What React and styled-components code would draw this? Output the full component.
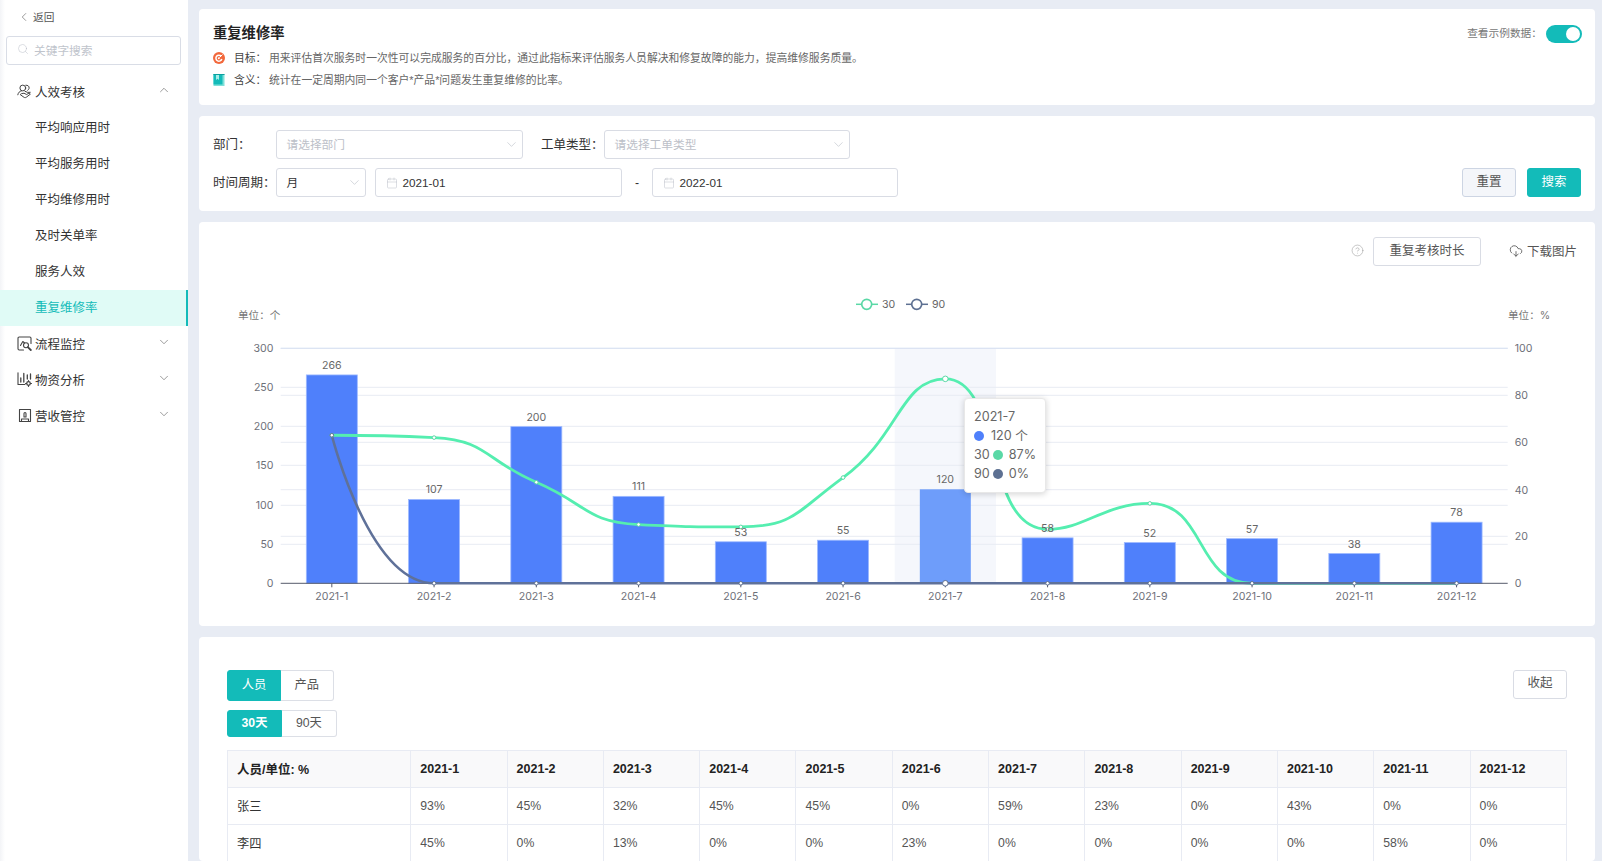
import React from "react";
import styled, { createGlobalStyle } from "styled-components";
import {
  ChevronLeft,
  ChevronUp,
  ChevronDown,
  Search,
  CircleHelp,
  CloudDownload,
  Calendar,
} from "lucide-react";

const GlobalStyle = createGlobalStyle`
  html, body {
    margin: 0;
    padding: 0;
    height: 861px;
    overflow: hidden;
    background: #e8ecf4;
    font-family: "Liberation Sans", "Noto Sans CJK SC", sans-serif;
    color: #333;
  }
  * { box-sizing: border-box; }
`;

const TEAL = "#13bbb9";
// full-width punctuation
const COLON = "\uFF1A";
const COMMA = "\uFF0C";

const Page = styled.div`
  display: flex;
  width: 1602px;
  height: 861px;
  overflow: hidden;
`;

const Sidebar = styled.aside`
  flex: 0 0 188px;
  background: linear-gradient(to right, #f3f4f7, #fff 5px);
  font-size: 12.5px;
`;

const BackRow = styled.div`
  display: flex;
  align-items: center;
  height: 33px;
  padding-left: 17px;
  gap: 2px;
  font-size: 10.7px;
  color: #555;
`;

const SearchBox = styled.div`
  display: flex;
  align-items: center;
  gap: 5px;
  height: 29px;
  margin: 3px 7px 9px 6px;
  padding: 0 0 3px 10px;
  border: 1px solid #d9dde6;
  border-radius: 3px;
  font-size: 11.7px;
  color: #c0c4cc;
`;

const MenuRow = styled.div`
  display: flex;
  align-items: center;
  height: 36px;
  padding: 0 17px 1px 16.5px;
  color: #333;
  svg.lead {
    flex: 0 0 15px;
    margin-right: 3.5px;
  }
  span {
    flex: 1;
  }
  svg.caret {
    margin-top: -4px;
  }
`;

const SubItem = styled.div`
  display: flex;
  align-items: center;
  height: 36px;
  padding: 0 0 4px 35px;
  color: ${(p) => (p.$active ? TEAL : "#333")};
  background: ${(p) => (p.$active ? "#e0fbf6" : "transparent")};
  border-right: ${(p) => (p.$active ? `2px solid ${TEAL}` : "none")};
`;

const Main = styled.main`
  flex: 1;
  display: flex;
  flex-direction: column;
  gap: 11px;
  padding: 9px 7px 0 11px;
  min-width: 0;
`;

const Card = styled.section`
  flex: 0 0 ${(p) => p.$h}px;
  background: #fff;
  border-radius: 4px;
`;

const IntroCard = styled(Card)`
  display: flex;
  justify-content: space-between;
  padding: 15px 13px 0 14px;
`;

const Title = styled.h1`
  margin: 0 0 4px;
  font-size: 14.3px;
  line-height: 18px;
  font-weight: 700;
  color: #222;
`;

const IntroRow = styled.div`
  display: flex;
  align-items: center;
  height: 22px;
  font-size: 10.8px;
  color: #666;
  svg {
    margin-top: 2px;
  }
  b {
    font-weight: 400;
    color: #444;
    width: 35px;
    margin-left: 9px;
  }
`;

const ExampleSwitch = styled.div`
  display: flex;
  align-items: flex-start;
  gap: 4px;
  padding-top: 1px;
  font-size: 10.7px;
  line-height: 17px;
  color: #777;
`;

const Toggle = styled.div`
  display: flex;
  align-items: center;
  justify-content: flex-end;
  width: 36px;
  height: 18px;
  padding-right: 2px;
  border-radius: 9px;
  background: ${TEAL};
  &::after {
    content: "";
    width: 14px;
    height: 14px;
    border-radius: 50%;
    background: #fff;
  }
`;

const FilterCard = styled(Card)`
  display: flex;
  flex-direction: column;
  gap: 9px;
  padding: 14px;
`;

const FilterRow = styled.div`
  display: flex;
  align-items: center;
  height: 29px;
`;

const FieldLabel = styled.label`
  flex: 0 0 63px;
  padding-bottom: 2px;
  font-size: 12.5px;
  color: #333;
  margin-left: ${(p) => p.$gap || 0}px;
`;

const Field = styled.div`
  display: flex;
  align-items: center;
  flex: 0 0 ${(p) => p.$w}px;
  height: 29px;
  padding: 0 3px 0 9.5px;
  margin-left: ${(p) => p.$gap || 0}px;
  border: 1px solid #d9dce4;
  border-radius: 3px;
  font-size: 11.7px;
  color: ${(p) => (p.$empty ? "#bcc0c8" : "#333")};
  span {
    flex: 1;
    padding-bottom: 2px;
  }
`;

const DateText = styled.div`
  margin-left: 5px;
  font-size: 11.7px;
  color: #333;
`;

const Dash = styled.div`
  flex: 0 0 30px;
  text-align: center;
  font-size: 12.25px;
  color: #333;
`;

const Actions = styled.div`
  display: flex;
  gap: 11px;
  margin-left: auto;
`;

const Button = styled.button`
  width: ${(p) => p.$w || 54}px;
  height: 29px;
  padding: 0 0 2px;
  border-radius: 3px;
  font: inherit;
  font-size: 12.5px;
  line-height: 24px;
  color: ${(p) => (p.$primary ? "#fff" : "#555")};
  background: ${(p) => (p.$primary ? TEAL : p.$soft ? "#f4f6fa" : "#fff")};
  border: 1px solid ${(p) => (p.$primary ? TEAL : p.$soft ? "#cdd5e3" : "#d9dce4")};
`;

const ChartCard = styled(Card)`
  display: flex;
  flex-direction: column;
`;

const ChartToolbar = styled.div`
  display: flex;
  align-items: center;
  justify-content: flex-end;
  flex: 0 0 48px;
  padding: 15px 18px 4px 0;
  color: #aaa;
`;

const HelpIcon = styled(CircleHelp)`
  margin: -2px 9px 0 0;
`;

const DownloadLink = styled.div`
  display: flex;
  align-items: center;
  gap: 4px;
  margin-left: 28px;
  padding-bottom: 2px;
  font-size: 12.5px;
  color: #555;
`;

const ChartArea = styled.div`
  position: relative;
  flex: 1;
  svg {
    display: block;
  }
`;

const Tooltip = styled.div`
  position: absolute;
  left: 765px;
  top: 128px;
  width: 82px;
  height: 95px;
  padding: 8px 0 0 9px;
  background: #fff;
  border: 1px solid #e8e8e8;
  border-radius: 4px;
  box-shadow: 0 1px 6px rgba(0, 0, 0, 0.18);
  font-family: Inter, "Noto Sans CJK SC", sans-serif;
  font-size: 12.6px;
  line-height: 19px;
  color: #666;
`;

const TipRow = styled.div`
  display: flex;
  align-items: center;
  gap: ${(p) => p.$gap || 3}px;
  white-space: nowrap;
`;

const TipValue = styled.span`
  margin-left: 3px;
`;

const Dot = styled.i`
  flex: 0 0 10px;
  height: 10px;
  border-radius: 50%;
  background: ${(p) => p.$color};
`;

const TableCard = styled(Card)`
  flex: 1;
  padding: 32.5px 28px 0;
  overflow: hidden;
`;

const TableHead = styled.div`
  display: flex;
  justify-content: space-between;
  align-items: flex-start;
`;

const Segments = styled.div`
  display: flex;
  flex-direction: column;
  align-items: flex-start;
  gap: 9px;
`;

const SegmentGroup = styled.div`
  display: inline-flex;
  height: ${(p) => p.$h}px;
`;

const Segment = styled.div`
  display: flex;
  align-items: center;
  justify-content: center;
  width: ${(p) => p.$w}px;
  padding-bottom: 3px;
  font-size: 12.25px;
  color: ${(p) => (p.$on ? "#fff" : "#555")};
  font-weight: ${(p) => (p.$bold ? 700 : 400)};
  background: ${(p) => (p.$on ? TEAL : "#fff")};
  border: 1px solid ${(p) => (p.$on ? TEAL : "#dcdfe6")};
  border-left-width: ${(p) => (p.$on ? 1 : 0)}px;
  border-radius: ${(p) => (p.$on ? "3px 0 0 3px" : "0 3px 3px 0")};
`;

const DataTable = styled.table`
  width: 1340px;
  margin-top: 13.5px;
  table-layout: fixed;
  border-collapse: collapse;
  font-size: 12.25px;
  col.first {
    width: 183.3px;
  }
  th, td {
    height: 37px;
    padding: 0 0 0 9px;
    text-align: left;
    border: 1px solid #e8ebf3;
  }
  th {
    background: #f9f9fa;
    font-size: 12.5px;
    font-weight: 700;
    color: #222;
  }
  th:first-child {
    padding-bottom: 2px;
  }
  td {
    color: #555;
  }
  td:first-child {
    color: #333;
  }
`;

/* sidebar + info icons */
const lineIcon = { fill: "none", stroke: "#444", strokeWidth: 1, strokeLinecap: "round", strokeLinejoin: "round" };

const PeopleIcon = () => (
  <svg className="lead" width="15" height="15" viewBox="0 0 15 15" {...lineIcon}>
    <circle cx="5.800" cy="4" r="2.900" />
    <path d="M.8 10.800c.4-2.200 1.900-3.700 3.600-3.900" />
    <path d="M8.800 1.200c2-.2 3.500 1 3.300 2.900-.1.9-.6 1.700-1.400 2.200" />
    <path d="M3.500 10.800l3.500 2.500c.8.5 1.600.4 2.300-.1l4-3-1.200-1.200-2.500 1.500-2.600-1.300-2.200.4z" />
    <path d="M8 7.300l2.600 1.100 2.600-.1" />
  </svg>
);

const ProcessIcon = () => (
  <svg className="lead" width="15" height="15" viewBox="0 0 15 15" {...lineIcon} strokeWidth="1.100">
    <path d="M6.500 14H2.200A1.200 1.200 0 0 1 1 12.800V2.200A1.200 1.200 0 0 1 2.200 1h10.600A1.200 1.200 0 0 1 14 2.200v5.300" />
    <path d="M3.500 9.500l2.300-4 1.800 1.500" />
    <circle cx="9" cy="9.300" r="2.500" />
    <path d="M10.800 11.100l3 2.900" strokeWidth="1.800" />
  </svg>
);

const StockIcon = () => (
  <svg className="lead" width="15" height="15" viewBox="0 0 15 15" {...lineIcon} strokeWidth="1.100">
    <path d="M1 .8v11.700h7" />
    <path d="M3.800 10V6M6.800 10V1.500M10.300 7V3M13.500 7V2" strokeWidth="1.300" />
    <circle cx="11.500" cy="11.500" r="1.800" strokeWidth="1.300" />
    <path d="M11.500 8.500v1M11.500 13.500v1M8.500 11.500h1M13.500 11.500h1" />
  </svg>
);

const RevenueIcon = () => (
  <svg className="lead" width="15" height="15" viewBox="0 0 15 15" {...lineIcon} strokeWidth="1.100">
    <path d="M2.500 1.500h11v12h-11z" />
    <path d="M4.500 13.500v-2.500h7v2.500" />
    <path d="M7 9V5.500a1 1 0 0 1 2 0V9z" />
  </svg>
);

const TargetIcon = () => (
  <svg width="12" height="12" viewBox="0 0 12 12">
    <circle cx="6" cy="6" r="6" fill="#f2683c" />
    <path d="M8.200 4.200A3 3 0 1 0 8.800 7" fill="none" stroke="#fff" strokeWidth="1.500" />
    <circle cx="5.800" cy="6.200" r="1" fill="#fff" />
    <path d="M6.500 5.500l3-3" stroke="#fff" strokeWidth="1" />
  </svg>
);

const BookIcon = () => (
  <svg width="12" height="12" viewBox="0 0 12 12">
    <rect x="0.500" width="11" height="12" fill="#7fe0d9" />
    <rect x="0.500" width="9" height="10.500" fill={TEAL} />
    <rect x="0.500" y="0" width="11" height="1" fill="#0e9f9d" />
    <path d="M3 1h3v5L4.500 4.800 3 6z" fill="#a8eee8" />
  </svg>
);

const DateIcon = () => <Calendar size={12} strokeWidth={1} color="#b9bdc6" />;

const Caret = ({ up }) => {
  const Icon = up ? ChevronUp : ChevronDown;
  return <Icon className="caret" size={14} strokeWidth={1} color="#555" />;
};

const SelectCaret = () => <ChevronDown size={15} strokeWidth={1} color="#bcc0c8" />;

/* chart data, in page coordinates */
const PLOT = { left: 280.7, right: 1507.7, top: 348.3, bottom: 583.3 };
const months = ["2021-1", "2021-2", "2021-3", "2021-4", "2021-5", "2021-6", "2021-7", "2021-8", "2021-9", "2021-10", "2021-11", "2021-12"];
const counts = [266, 107, 200, 111, 53, 55, 120, 58, 52, 57, 38, 78];
const rate30 = [63, 62, 43, 25, 24, 45, 87, 23, 34, 0, 0, 0];
const rate90 = [63, 0, 0, 0, 0, 0, 0, 0, 0, 0, 0, 0];
const leftTicks = [[300, 348.3], [250, 387.3], [200, 426.3], [150, 465.3], [100, 505.3], [50, 544.3], [0, 583.3]];
const rightTicks = [[100, 348.3], [80, 395.3], [60, 442.3], [40, 489.7], [20, 536.3], [0, 583.3]];

const step = (PLOT.right - PLOT.left) / 12;
const xAt = (i) => PLOT.left + step * (i + 0.5);
const yCount = (v) => PLOT.bottom - (v / 300) * (PLOT.bottom - PLOT.top);
const yRate = (v) => PLOT.bottom - (v / 100) * (PLOT.bottom - PLOT.top);

const clamp = (v, a, b) => Math.max(Math.min(a, b), Math.min(v, Math.max(a, b)));

// same spline as the chart library uses for smooth lines
function smoothPath(pts, smooth = 0.5) {
  let d = `M${pts[0][0]} ${pts[0][1]}`;
  let cp0 = pts[0];
  for (let i = 1; i < pts.length; i++) {
    const [x, y] = pts[i];
    const [px, py] = pts[i - 1];
    const next = pts[i + 1];
    if (!next) {
      d += `C${cp0[0]} ${cp0[1]} ${x} ${y} ${x} ${y}`;
      break;
    }
    const [nx, ny] = next;
    const lenPrev = Math.hypot(x - px, y - py);
    const lenNext = Math.hypot(nx - x, ny - y);
    const ratio = lenNext / (lenPrev + lenNext);
    const ncx = clamp(x + (nx - px) * smooth * ratio, x, nx);
    const ncy = clamp(y + (ny - py) * smooth * ratio, y, ny);
    const c1x = clamp(x - ((ncx - x) * lenPrev) / lenNext, px, x);
    const c1y = clamp(y - ((ncy - y) * lenPrev) / lenNext, py, y);
    d += `C${cp0[0]} ${cp0[1]} ${c1x} ${c1y} ${x} ${y}`;
    cp0 = [clamp(x + ((x - c1x) * lenNext) / lenPrev, x, nx), clamp(y + ((y - c1y) * lenNext) / lenPrev, y, ny)];
  }
  return d;
}

const chartText = { fontFamily: 'Inter, "Noto Sans CJK SC", sans-serif', fontSize: 10.6, fill: "#6e7079" };

const Chart = () => (
  <svg width="1396" height="356" viewBox="199 270 1396 356">
    <text x="238" y="319" {...chartText} fill="#777">{`单位${COLON}个`}</text>
    <text x="1508" y="319" {...chartText} fill="#777">{`单位${COLON}%`}</text>

    <g {...chartText} fontSize="10.6" fill="#666">
      <path d="M856 304.300h22" stroke="#5ad8a6" strokeWidth="1.500" />
      <circle cx="866.700" cy="304.300" r="5" fill="#fff" stroke="#5ad8a6" strokeWidth="1.700" />
      <text x="882" y="308">30</text>
      <path d="M906 304.300h22" stroke="#5d7092" strokeWidth="1.500" />
      <circle cx="916.700" cy="304.300" r="5" fill="#fff" stroke="#5d7092" strokeWidth="1.700" />
      <text x="932" y="308">90</text>
    </g>

    <rect x="894.700" y={PLOT.top} width="101.300" height={PLOT.bottom - PLOT.top} fill="#f5f7fc" />

    {[...leftTicks, ...rightTicks].filter(([, y]) => y !== PLOT.bottom).map(([, y], i) => (
      <path key={i} d={`M${PLOT.left} ${y}H${PLOT.right}`} stroke={y === PLOT.top ? "#dbe3f3" : "#e8ebf3"} strokeWidth="1" />
    ))}

    {leftTicks.map(([v, y]) => (
      <text key={v} x="273.500" y={y + 4} textAnchor="end" {...chartText}>{v}</text>
    ))}
    {rightTicks.map(([v, y]) => (
      <text key={v} x="1514.700" y={y + 4} {...chartText}>{v}</text>
    ))}

    {counts.map((v, i) => (
      <rect
        key={i}
        x={xAt(i) - 25.500}
        y={yCount(v)}
        width="51"
        height={PLOT.bottom - yCount(v)}
        fill={i === 6 ? "#6e9dfa" : "#4f80fb"}
        stroke={i === 6 ? "none" : "#9db9ff"}
        strokeWidth="0.800"
      />
    ))}

    <path d={`M${PLOT.left} ${PLOT.bottom}H${PLOT.right}`} stroke="#555a6b" strokeWidth="1" />
    {months.map((m, i) => (
      <g key={m}>
        <path d={`M${xAt(i)} ${PLOT.bottom}v4`} stroke="#555a6b" strokeWidth="1" />
        <text x={xAt(i)} y="600" textAnchor="middle" {...chartText}>{m}</text>
      </g>
    ))}

    <path d={smoothPath(rate30.map((v, i) => [xAt(i), yRate(v)]))} fill="none" stroke="#55eeb0" strokeWidth="2.800" />
    <path d={smoothPath(rate90.map((v, i) => [xAt(i), yRate(v)]))} fill="none" stroke="#5f7199" strokeWidth="2.600" />

    {rate30.map((v, i) => (
      v > 0 && <circle key={i} cx={xAt(i)} cy={yRate(v)} r={i === 6 ? 2.800 : 1.800} fill="#fff" stroke="#5ad8a6" strokeWidth="1" />
    ))}
    {rate90.map((v, i) => (
      <circle key={i} cx={xAt(i)} cy={yRate(v)} r={i === 6 ? 2.800 : 1.800} fill="#fff" stroke="#5d7092" strokeWidth="1" />
    ))}

    {counts.map((v, i) => (
      <text key={i} x={xAt(i)} y={yCount(v) - 6} textAnchor="middle" {...chartText} fill="#666">{v}</text>
    ))}
  </svg>
);

const subItems = ["平均响应用时", "平均服务用时", "平均维修用时", "及时关单率", "服务人效", "重复维修率"];
const rows = [
  { name: "张三", values: [93, 45, 32, 45, 45, 0, 59, 23, 0, 43, 0, 0] },
  { name: "李四", values: [45, 0, 13, 0, 0, 23, 0, 0, 0, 0, 58, 0] },
];
const goalText = `用来评估首次服务时一次性可以完成服务的百分比${COMMA}通过此指标来评估服务人员解决和修复故障的能力${COMMA}提高维修服务质量。`;

const App = () => (
  <Page>
    <GlobalStyle />
    <Sidebar>
      <BackRow>
        <ChevronLeft size={14} strokeWidth={1} />
        返回
      </BackRow>
      <SearchBox>
        <Search size={12} strokeWidth={1} color="#b9bdc6" />
        关键字搜索
      </SearchBox>
      <MenuRow>
        <PeopleIcon />
        <span>人效考核</span>
        <Caret up />
      </MenuRow>
      {subItems.map((s) => (
        <SubItem key={s} $active={s === "重复维修率"}>{s}</SubItem>
      ))}
      <MenuRow>
        <ProcessIcon />
        <span>流程监控</span>
        <Caret />
      </MenuRow>
      <MenuRow>
        <StockIcon />
        <span>物资分析</span>
        <Caret />
      </MenuRow>
      <MenuRow>
        <RevenueIcon />
        <span>营收管控</span>
        <Caret />
      </MenuRow>
    </Sidebar>

    <Main>
      <IntroCard $h={96}>
        <div>
          <Title>重复维修率</Title>
          <IntroRow>
            <TargetIcon />
            <b>{`目标${COLON}`}</b>
            {goalText}
          </IntroRow>
          <IntroRow>
            <BookIcon />
            <b>{`含义${COLON}`}</b>
            统计在一定周期内同一个客户*产品*问题发生重复维修的比率。
          </IntroRow>
        </div>
        <ExampleSwitch>
          {`查看示例数据${COLON}`}
          <Toggle />
        </ExampleSwitch>
      </IntroCard>

      <FilterCard $h={95}>
        <FilterRow>
          <FieldLabel>{`部门${COLON}`}</FieldLabel>
          <Field $w={247} $empty>
            <span>请选择部门</span>
            <SelectCaret />
          </Field>
          <FieldLabel $gap={18}>{`工单类型${COLON}`}</FieldLabel>
          <Field $w={246} $empty>
            <span>请选择工单类型</span>
            <SelectCaret />
          </Field>
        </FilterRow>
        <FilterRow>
          <FieldLabel>{`时间周期${COLON}`}</FieldLabel>
          <Field $w={90}>
            <span>月</span>
            <SelectCaret />
          </Field>
          <Field $w={247} $gap={9}>
            <DateIcon />
            <DateText>2021-01</DateText>
          </Field>
          <Dash>-</Dash>
          <Field $w={246}>
            <DateIcon />
            <DateText>2022-01</DateText>
          </Field>
          <Actions>
            <Button $soft>重置</Button>
            <Button $primary>搜索</Button>
          </Actions>
        </FilterRow>
      </FilterCard>

      <ChartCard $h={403}>
        <ChartToolbar>
          <HelpIcon size={13} strokeWidth={1} color="#999" />
          <Button $w={108}>重复考核时长</Button>
          <DownloadLink>
            <CloudDownload size={14} strokeWidth={1.2} color="#333" />
            下载图片
          </DownloadLink>
        </ChartToolbar>
        <ChartArea>
          <Chart />
          <Tooltip>
            <TipRow>2021-7</TipRow>
            <TipRow $gap={7}><Dot $color="#4f80fb" />120 个</TipRow>
            <TipRow>30<Dot $color="#5ad8a6" /><TipValue>87%</TipValue></TipRow>
            <TipRow>90<Dot $color="#5d7092" /><TipValue>0%</TipValue></TipRow>
          </Tooltip>
        </ChartArea>
      </ChartCard>

      <TableCard>
        <TableHead>
          <Segments>
            <SegmentGroup $h={31}>
              <Segment $on $w={54}>人员</Segment>
              <Segment $w={52.5}>产品</Segment>
            </SegmentGroup>
            <SegmentGroup $h={27}>
              <Segment $on $bold $w={55}>30天</Segment>
              <Segment $w={54.7}>90天</Segment>
            </SegmentGroup>
          </Segments>
          <Button>收起</Button>
        </TableHead>
        <DataTable>
          <colgroup>
            <col className="first" />
            {months.map((m) => <col key={m} />)}
          </colgroup>
          <thead>
            <tr>
              <th>人员/单位: %</th>
              {months.map((m) => <th key={m}>{m}</th>)}
            </tr>
          </thead>
          <tbody>
            {rows.map((r) => (
              <tr key={r.name}>
                <td>{r.name}</td>
                {r.values.map((v, i) => <td key={i}>{v}%</td>)}
              </tr>
            ))}
          </tbody>
        </DataTable>
      </TableCard>
    </Main>
  </Page>
);

export default App;
